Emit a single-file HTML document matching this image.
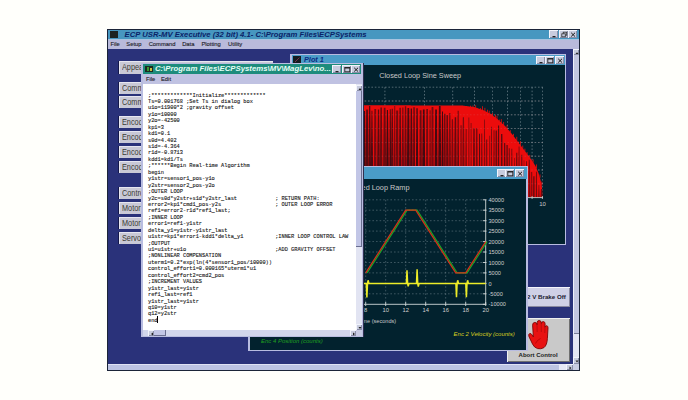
<!DOCTYPE html>
<html><head><meta charset="utf-8">
<style>
*{margin:0;padding:0;box-sizing:border-box}
html,body{width:688px;height:400px;overflow:hidden;background:#fffffb;font-family:"Liberation Sans",sans-serif}
.a{position:absolute}
.btn{left:119px;width:154px;height:12px;background:#c9c9d6;border-top:1px solid #e6e6f0;border-left:1px solid #e6e6f0;box-shadow:-1px 0 0 #14184a;font-size:0;white-space:nowrap;overflow:hidden}
.btn span{position:absolute;left:1.6px;top:-1px;font-size:8.8px;line-height:12px;color:#3c3c34;transform:scaleX(0.83);transform-origin:0 0}
.win{background:#b8bce0}
.pp{background:#02222e}
.tb{background:#4a9cc8}
.wb{position:absolute;width:9px;height:8px;background:#c8ccde;border-top:1px solid #f2f4fc;border-left:1px solid #f2f4fc;box-shadow:inset -1px -1px 0 #8a8ea8}
.wb svg{position:absolute;left:0;top:0}
.menu{font-size:5.8px;color:#1c1c28;-webkit-text-stroke:0.12px #1c1c28;white-space:nowrap;line-height:7px}
pre{position:absolute;left:148px;top:92.5px;font-family:"Liberation Mono",monospace;font-size:5.3px;line-height:6.43px;color:#1a1a1a;-webkit-text-stroke:0.12px #1a1a1a}
.ttl{font-weight:bold;font-style:italic;white-space:nowrap}
.lbl{white-space:nowrap;color:#c8c8c8}
</style></head><body>
<!-- outer window -->
<div class="a" style="left:107px;top:29px;width:473px;height:342px;background:#1b2438"></div>
<div class="a" style="left:108px;top:30px;width:471px;height:9px;background:#4797c0"></div>
<div class="a" style="left:110px;top:31px;width:8px;height:7px;background:#1c2422"></div>
<div class="a ttl" style="left:124.6px;top:29.5px;font-size:7.7px;color:#0a2468">ECP USR-MV Executive (32 bit) 4.1- C:\Program Files\ECPSystems</div>
<div class="a wb" style="left:549px;top:30px"><svg width="9" height="8"><rect x="2.5" y="5" width="3" height="1.3" fill="#222"/></svg></div>
<div class="a wb" style="left:558.5px;top:30px"><svg width="9" height="8"><rect x="3.2" y="1.2" width="3.5" height="3" fill="none" stroke="#333" stroke-width="0.8"/><rect x="1.8" y="2.8" width="3.5" height="3" fill="#c4c8dc" stroke="#333" stroke-width="0.8"/></svg></div>
<div class="a wb" style="left:568.3px;top:30px"><svg width="9" height="8"><path d="M2.2 1.8L6 5.5M6 1.8L2.2 5.5" stroke="#1a1a1a" stroke-width="1"/></svg></div>
<div class="a" style="left:108px;top:39px;width:471px;height:10px;background:#b9badb;border-top:1px solid #a8c4e0"></div>
<div class="a menu" style="left:110.5px;top:40.5px">File</div>
<div class="a menu" style="left:126.3px;top:40.5px">Setup</div>
<div class="a menu" style="left:148.7px;top:40.5px">Command</div>
<div class="a menu" style="left:182.2px;top:40.5px">Data</div>
<div class="a menu" style="left:201.4px;top:40.5px">Plotting</div>
<div class="a menu" style="left:228.1px;top:40.5px">Utility</div>
<div class="a" style="left:108px;top:49px;width:465px;height:315px;background:#2a327a"></div>
<div class="a" style="left:573px;top:49px;width:6px;height:315px;background:#c3c6e0"></div>
<div class="a wb" style="left:573px;top:49px;width:6px;height:6px"><svg width="6" height="6"><path d="M1.5 4L3 2.2L4.5 4Z" fill="#222"/></svg></div>
<div class="a" style="left:573px;top:334px;width:6px;height:23px;background:#e4e6f4"></div><div class="a" style="left:573px;top:55px;width:6px;height:279px;background:#c3c6e0;border-left:1px solid #eef0fa;box-shadow:inset 0 -1px 0 #7a7e98"></div><div class="a wb" style="left:573px;top:357px;width:6px;height:7px"><svg width="6" height="7"><path d="M1.5 2.5L3 4.5L4.5 2.5Z" fill="#222"/></svg></div>
<div class="a" style="left:108px;top:364px;width:471px;height:6px;background:#bcc3e3;border-top:1px solid #dfe2f4"></div><div class="a" style="left:558.5px;top:364px;width:7.5px;height:6px;background:#e6e8f6"></div><div class="a wb" style="left:566px;top:364px;width:7px;height:6px"><svg width="7" height="6"><path d="M2.5 1.5L4.5 3L2.5 4.5Z" fill="#222"/></svg></div><div class="a" style="left:573px;top:364px;width:6px;height:6px;background:#c8cce2"></div>

<!-- left buttons -->
<div class="a btn" style="top:61px;height:13px"><span>Appearance</span></div>
<div class="a btn" style="top:82px"><span>Comm</span></div>
<div class="a btn" style="top:96px"><span>Comm</span></div>
<div class="a btn" style="top:116px"><span>Encoder</span></div>
<div class="a btn" style="top:131px"><span>Encoder</span></div>
<div class="a btn" style="top:146px"><span>Encoder</span></div>
<div class="a btn" style="top:161px"><span>Encoder</span></div>
<div class="a btn" style="top:187px"><span>Control</span></div>
<div class="a btn" style="top:202px"><span>Motor</span></div>
<div class="a btn" style="top:217px"><span>Motor</span></div>
<div class="a btn" style="top:232px"><span>Servo</span></div>

<!-- right buttons -->
<div class="a" style="left:507px;top:286.5px;width:63px;height:20.5px;background:#cfd0e6;border-top:1px solid #f4f4fc;border-left:1px solid #f4f4fc;box-shadow:inset -1px -1px 0 #8888a0"></div>
<div class="a" style="left:527px;top:292.5px;font-size:6.2px;font-weight:bold;color:#202030;white-space:nowrap">2 V Brake Off</div>
<div class="a" style="left:507px;top:317.5px;width:63px;height:44px;background:#c9c9c9;border-top:1px solid #f0f0f0;border-left:1px solid #f0f0f0;box-shadow:inset -1px -1px 0 #707070"></div>
<svg class="a" style="left:527px;top:319px" width="22" height="31" viewBox="0 0 22 31">
<path d="M6.2 15 L5.6 6.2 Q5.6 3.4 7.9 3.4 Q10 3.4 10.1 5.8 L10.2 3.4 Q10.3 1.5 12.2 1.5 Q14.1 1.5 14.2 3.6 L14.3 4.6 Q14.4 2.6 16.3 2.6 Q18.2 2.7 18.1 4.9 L18 8.4 Q18.3 6.6 19.7 6.7 Q21.1 6.9 21 8.9 L20.4 19.5 Q20 26.2 17 28.6 Q14 30.4 10.6 29.6 Q7.2 28.6 5.6 25.2 L1.9 17.4 Q1.2 15.3 2.6 14.6 Q4 14 5 15.8 L6.4 18 Z" fill="#e81212" stroke="#800606" stroke-width="0.9"/>
<path d="M10 6 L10.2 13 M14.2 5 L14.3 13 M18 9 L17.8 14" stroke="#a00808" stroke-width="0.6" fill="none"/>
<path d="M8.5 24.5 Q10 21 13.5 19.5" stroke="#a00" stroke-width="0.7" fill="none"/>
</svg>
<div class="a" style="left:518.6px;top:351.5px;font-size:6px;font-weight:bold;color:#202020;white-space:nowrap">Abort Control</div>

<!-- Plot 1 window -->
<div class="a win" style="left:290px;top:54px;width:276px;height:191px"></div>
<div class="a tb" style="left:292px;top:55px;width:273px;height:10px"></div>
<div class="a" style="left:292.8px;top:56px;width:8px;height:7px;background:#141c20"></div><svg class="a" style="left:292.8px;top:56px" width="8" height="7"><path d="M2 6L6.5 1.5" stroke="#803050" stroke-width="0.9"/></svg>
<div class="a ttl" style="left:304px;top:55px;font-size:7.3px;color:#0c2a80">Plot 1</div>
<div class="a wb" style="left:535.5px;top:56px"><svg width="9" height="8"><rect x="2.5" y="5" width="3" height="1.3" fill="#222"/></svg></div>
<div class="a wb" style="left:545px;top:56px"><svg width="9" height="8"><rect x="1.8" y="1.5" width="5" height="4.3" fill="none" stroke="#222" stroke-width="0.9"/><rect x="1.8" y="1.5" width="5" height="1" fill="#222"/></svg></div>
<div class="a wb" style="left:554.5px;top:56px"><svg width="9" height="8"><path d="M2.2 1.8L6 5.5M6 1.8L2.2 5.5" stroke="#1a1a1a" stroke-width="1"/></svg></div>
<div class="a pp" style="left:291px;top:65px;width:274px;height:179px"></div>
<div class="a lbl" style="left:379.2px;top:71px;font-size:7.3px">Closed Loop Sine Sweep</div>
<svg class="a" style="left:0;top:0" width="688" height="400" viewBox="0 0 688 400"><defs><clipPath id="c1"><rect x="291" y="65" width="274" height="179"/></clipPath><clipPath id="c2"><rect x="250" y="179" width="276" height="171"/></clipPath></defs><g clip-path="url(#c1)">
<line x1="300" y1="87.2" x2="543" y2="87.2" stroke="#8fa0a8" stroke-width="0.7" stroke-dasharray="1.6 1.8" opacity="0.8"/>
<line x1="300" y1="101.0" x2="543" y2="101.0" stroke="#8fa0a8" stroke-width="0.7" stroke-dasharray="1.6 1.8" opacity="0.8"/>
<line x1="300" y1="114.8" x2="543" y2="114.8" stroke="#8fa0a8" stroke-width="0.7" stroke-dasharray="1.6 1.8" opacity="0.8"/>
<line x1="300" y1="128.6" x2="543" y2="128.6" stroke="#8fa0a8" stroke-width="0.7" stroke-dasharray="1.6 1.8" opacity="0.8"/>
<line x1="300" y1="142.4" x2="543" y2="142.4" stroke="#8fa0a8" stroke-width="0.7" stroke-dasharray="1.6 1.8" opacity="0.8"/>
<line x1="300" y1="156.2" x2="543" y2="156.2" stroke="#8fa0a8" stroke-width="0.7" stroke-dasharray="1.6 1.8" opacity="0.8"/>
<line x1="300" y1="170.0" x2="543" y2="170.0" stroke="#8fa0a8" stroke-width="0.7" stroke-dasharray="1.6 1.8" opacity="0.8"/>
<line x1="300" y1="183.8" x2="543" y2="183.8" stroke="#8fa0a8" stroke-width="0.7" stroke-dasharray="1.6 1.8" opacity="0.8"/>
<line x1="317.0" y1="87.2" x2="317.0" y2="197.6" stroke="#8fa0a8" stroke-width="0.7" stroke-dasharray="1.6 1.8" opacity="0.8"/>
<line x1="384.9" y1="87.2" x2="384.9" y2="197.6" stroke="#8fa0a8" stroke-width="0.7" stroke-dasharray="1.6 1.8" opacity="0.8"/>
<line x1="424.5" y1="87.2" x2="424.5" y2="197.6" stroke="#8fa0a8" stroke-width="0.7" stroke-dasharray="1.6 1.8" opacity="0.8"/>
<line x1="452.7" y1="87.2" x2="452.7" y2="197.6" stroke="#8fa0a8" stroke-width="0.7" stroke-dasharray="1.6 1.8" opacity="0.8"/>
<line x1="474.5" y1="87.2" x2="474.5" y2="197.6" stroke="#8fa0a8" stroke-width="0.7" stroke-dasharray="1.6 1.8" opacity="0.8"/>
<line x1="492.4" y1="87.2" x2="492.4" y2="197.6" stroke="#8fa0a8" stroke-width="0.7" stroke-dasharray="1.6 1.8" opacity="0.8"/>
<line x1="507.5" y1="87.2" x2="507.5" y2="197.6" stroke="#8fa0a8" stroke-width="0.7" stroke-dasharray="1.6 1.8" opacity="0.8"/>
<line x1="520.6" y1="87.2" x2="520.6" y2="197.6" stroke="#8fa0a8" stroke-width="0.7" stroke-dasharray="1.6 1.8" opacity="0.8"/>
<line x1="532.1" y1="87.2" x2="532.1" y2="197.6" stroke="#8fa0a8" stroke-width="0.7" stroke-dasharray="1.6 1.8" opacity="0.8"/>
<line x1="542.4" y1="87.2" x2="542.4" y2="197.6" stroke="#8fa0a8" stroke-width="0.7" stroke-dasharray="1.6 1.8" opacity="0.8"/>
<line x1="159.5" y1="87.2" x2="159.5" y2="197.6" stroke="#8fa0a8" stroke-width="0.7" stroke-dasharray="1.6 1.8" opacity="0.8"/>
<line x1="199.1" y1="87.2" x2="199.1" y2="197.6" stroke="#8fa0a8" stroke-width="0.7" stroke-dasharray="1.6 1.8" opacity="0.8"/>
<line x1="227.3" y1="87.2" x2="227.3" y2="197.6" stroke="#8fa0a8" stroke-width="0.7" stroke-dasharray="1.6 1.8" opacity="0.8"/>
<line x1="249.1" y1="87.2" x2="249.1" y2="197.6" stroke="#8fa0a8" stroke-width="0.7" stroke-dasharray="1.6 1.8" opacity="0.8"/>
<line x1="267.0" y1="87.2" x2="267.0" y2="197.6" stroke="#8fa0a8" stroke-width="0.7" stroke-dasharray="1.6 1.8" opacity="0.8"/>
<line x1="282.1" y1="87.2" x2="282.1" y2="197.6" stroke="#8fa0a8" stroke-width="0.7" stroke-dasharray="1.6 1.8" opacity="0.8"/>
<line x1="295.2" y1="87.2" x2="295.2" y2="197.6" stroke="#8fa0a8" stroke-width="0.7" stroke-dasharray="1.6 1.8" opacity="0.8"/>
<line x1="306.7" y1="87.2" x2="306.7" y2="197.6" stroke="#8fa0a8" stroke-width="0.7" stroke-dasharray="1.6 1.8" opacity="0.8"/>
<polygon points="291,197.6 291.0,105.0 291.5,105.0 292.0,105.0 292.5,105.0 293.0,105.0 293.5,105.0 294.0,105.0 294.5,105.0 295.0,105.0 295.5,105.0 296.0,105.0 296.5,105.0 297.0,105.0 297.5,105.0 298.0,105.0 298.5,105.0 299.0,105.0 299.5,105.0 300.0,105.0 300.5,105.0 301.0,105.0 301.5,105.0 302.0,105.0 302.5,105.0 303.0,105.0 303.5,105.0 304.0,105.0 304.5,105.0 305.0,105.0 305.5,105.0 306.0,105.0 306.5,105.0 307.0,105.0 307.5,105.0 308.0,105.0 308.5,105.1 309.0,105.1 309.5,105.1 310.0,105.1 310.5,105.1 311.0,105.1 311.5,105.1 312.0,105.1 312.5,105.1 313.0,105.1 313.5,105.1 314.0,105.1 314.5,105.1 315.0,105.1 315.5,105.1 316.0,105.1 316.5,105.1 317.0,105.1 317.5,105.1 318.0,105.1 318.5,105.1 319.0,105.1 319.5,105.1 320.0,105.1 320.5,105.1 321.0,105.1 321.5,105.1 322.0,105.1 322.5,105.1 323.0,105.1 323.5,105.1 324.0,105.1 324.5,105.1 325.0,105.1 325.5,105.1 326.0,105.1 326.5,105.1 327.0,105.1 327.5,105.1 328.0,105.1 328.5,105.1 329.0,105.1 329.5,105.1 330.0,105.1 330.5,105.1 331.0,105.1 331.5,105.1 332.0,105.1 332.5,105.1 333.0,105.1 333.5,105.1 334.0,105.1 334.5,105.1 335.0,105.1 335.5,105.1 336.0,105.1 336.5,105.1 337.0,105.1 337.5,105.1 338.0,105.1 338.5,105.1 339.0,105.1 339.5,105.1 340.0,105.1 340.5,105.1 341.0,105.1 341.5,105.1 342.0,105.1 342.5,105.2 343.0,105.2 343.5,105.2 344.0,105.2 344.5,105.2 345.0,105.2 345.5,105.2 346.0,105.2 346.5,105.2 347.0,105.2 347.5,105.2 348.0,105.2 348.5,105.2 349.0,105.2 349.5,105.2 350.0,105.2 350.5,105.2 351.0,105.2 351.5,105.2 352.0,105.2 352.5,105.2 353.0,105.2 353.5,105.2 354.0,105.2 354.5,105.2 355.0,105.2 355.5,105.2 356.0,105.2 356.5,105.2 357.0,105.2 357.5,105.2 358.0,105.2 358.5,105.2 359.0,105.2 359.5,105.2 360.0,105.2 360.5,105.2 361.0,105.2 361.5,105.2 362.0,105.2 362.5,105.2 363.0,105.2 363.5,105.2 364.0,105.2 364.5,105.2 365.0,105.2 365.5,105.2 366.0,105.2 366.5,105.2 367.0,105.2 367.5,105.2 368.0,105.2 368.5,105.2 369.0,105.2 369.5,105.2 370.0,105.2 370.5,105.2 371.0,105.2 371.5,105.2 372.0,105.2 372.5,105.2 373.0,105.2 373.5,105.2 374.0,105.2 374.5,105.2 375.0,105.2 375.5,105.2 376.0,105.2 376.5,105.2 377.0,105.3 377.5,105.3 378.0,105.3 378.5,105.3 379.0,105.3 379.5,105.3 380.0,105.3 380.5,105.3 381.0,105.3 381.5,105.3 382.0,105.3 382.5,105.3 383.0,105.3 383.5,105.3 384.0,105.3 384.5,105.3 385.0,105.3 385.5,105.3 386.0,105.3 386.5,105.3 387.0,105.3 387.5,105.3 388.0,105.3 388.5,105.3 389.0,105.3 389.5,105.3 390.0,105.3 390.5,105.3 391.0,105.3 391.5,105.3 392.0,105.3 392.5,105.3 393.0,105.3 393.5,105.3 394.0,105.3 394.5,105.3 395.0,105.3 395.5,105.3 396.0,105.3 396.5,105.3 397.0,105.3 397.5,105.3 398.0,105.3 398.5,105.3 399.0,105.3 399.5,105.3 400.0,105.3 400.5,105.3 401.0,105.3 401.5,105.3 402.0,105.3 402.5,105.3 403.0,105.3 403.5,105.3 404.0,105.3 404.5,105.3 405.0,105.3 405.5,105.3 406.0,105.3 406.5,105.3 407.0,105.3 407.5,105.3 408.0,105.3 408.5,105.3 409.0,105.3 409.5,105.3 410.0,105.3 410.5,105.3 411.0,105.4 411.5,105.4 412.0,105.4 412.5,105.4 413.0,105.4 413.5,105.4 414.0,105.4 414.5,105.4 415.0,105.4 415.5,105.4 416.0,105.4 416.5,105.4 417.0,105.4 417.5,105.4 418.0,105.4 418.5,105.4 419.0,105.4 419.5,105.4 420.0,105.4 420.5,105.4 421.0,105.4 421.5,105.4 422.0,105.4 422.5,105.4 423.0,105.4 423.5,105.4 424.0,105.4 424.5,105.4 425.0,105.4 425.5,105.4 426.0,105.4 426.5,105.4 427.0,105.4 427.5,105.4 428.0,105.4 428.5,105.4 429.0,105.4 429.5,105.4 430.0,105.4 430.5,105.4 431.0,105.4 431.5,105.4 432.0,105.4 432.5,105.4 433.0,105.4 433.5,105.4 434.0,105.4 434.5,105.4 435.0,105.4 435.5,105.4 436.0,105.4 436.5,105.4 437.0,105.4 437.5,105.4 438.0,105.4 438.5,105.4 439.0,105.4 439.5,105.4 440.0,105.4 440.5,105.4 441.0,105.4 441.5,105.4 442.0,105.4 442.5,105.4 443.0,105.4 443.5,105.4 444.0,105.4 444.5,105.4 445.0,105.5 445.5,105.5 446.0,105.5 446.5,105.5 447.0,105.5 447.5,105.5 448.0,105.5 448.5,105.5 449.0,105.5 449.5,105.5 450.0,105.5 450.5,105.5 451.0,105.5 451.5,105.5 452.0,105.5 452.5,105.5 453.0,105.5 453.5,105.5 454.0,105.5 454.5,105.5 455.0,105.5 455.5,105.5 456.0,105.5 456.5,105.5 457.0,105.5 457.5,105.5 458.0,105.5 458.5,105.5 459.0,105.5 459.5,105.5 460.0,105.5 460.5,105.5 461.0,105.5 461.5,105.5 462.0,105.5 462.5,105.6 463.0,105.6 463.5,105.7 464.0,105.8 464.5,105.8 465.0,105.9 465.5,105.9 466.0,106.0 466.5,106.1 467.0,106.1 467.5,106.2 468.0,106.2 468.5,106.3 469.0,106.4 469.5,106.4 470.0,106.5 470.5,106.6 471.0,106.6 471.5,106.7 472.0,106.8 472.5,106.8 473.0,106.9 473.5,106.9 474.0,107.0 474.5,107.2 475.0,107.3 475.5,107.5 476.0,107.7 476.5,107.8 477.0,108.0 477.5,108.2 478.0,108.3 478.5,108.5 479.0,108.7 479.5,108.8 480.0,109.0 480.5,109.2 481.0,109.3 481.5,109.5 482.0,109.7 482.5,109.8 483.0,110.0 483.5,110.2 484.0,110.5 484.5,110.8 485.0,111.0 485.5,111.2 486.0,111.5 486.5,111.8 487.0,112.0 487.5,112.2 488.0,112.5 488.5,112.8 489.0,113.0 489.5,113.2 490.0,113.5 490.5,113.8 491.0,114.0 491.5,114.4 492.0,114.8 492.5,115.2 493.0,115.6 493.5,116.0 494.0,116.4 494.5,116.8 495.0,117.1 495.5,117.5 496.0,117.9 496.5,118.3 497.0,118.7 497.5,119.1 498.0,119.5 498.5,120.0 499.0,120.4 499.5,120.9 500.0,121.4 500.5,121.8 501.0,122.3 501.5,122.8 502.0,123.2 502.5,123.7 503.0,124.1 503.5,124.6 504.0,125.1 504.5,125.5 505.0,126.0 505.5,126.6 506.0,127.1 506.5,127.7 507.0,128.3 507.5,128.9 508.0,129.4 508.5,130.0 509.0,130.6 509.5,131.1 510.0,131.7 510.5,132.3 511.0,132.9 511.5,133.4 512.0,134.0 512.5,134.7 513.0,135.3 513.5,136.0 514.0,136.7 514.5,137.3 515.0,138.0 515.5,138.7 516.0,139.3 516.5,140.0 517.0,140.7 517.5,141.3 518.0,142.0 518.5,142.7 519.0,143.3 519.5,143.9 520.0,144.6 520.5,145.2 521.0,145.9 521.5,146.6 522.0,147.2 522.5,147.8 523.0,148.5 523.5,149.2 524.0,149.8 524.5,150.4 525.0,151.1 525.5,151.8 526.0,152.4 526.5,153.1 527.0,153.7 527.5,154.3 528.0,155.0 528.5,155.7 529.0,156.4 529.5,157.1 530.0,157.8 530.5,158.4 531.0,159.1 531.5,159.8 532.0,160.5 532.5,161.3 533.0,162.1 533.5,162.9 534.0,163.6 534.5,164.4 535.0,165.2 535.5,166.0 536.0,167.2 536.5,168.3 537.0,169.5 537.5,170.7 538.0,171.8 538.5,173.0 539.0,174.7 539.5,176.5 540.0,178.2 540.5,180.0 541.0,182.2 541.5,185.1 542.0,188.0 542.5,196.0 542.6,197.6" fill="#ec0c0c"/>
<rect x="470.0" y="105.7" width="0.8" height="1.8" fill="#ec0c0c"/>
<rect x="472.6" y="105.5" width="0.8" height="2.3" fill="#ec0c0c"/>
<rect x="475.3" y="105.2" width="0.8" height="3.2" fill="#ec0c0c"/>
<rect x="476.9" y="107.9" width="0.8" height="1.0" fill="#ec0c0c"/>
<rect x="480.1" y="108.1" width="0.8" height="1.9" fill="#ec0c0c"/>
<rect x="482.1" y="106.2" width="0.8" height="4.5" fill="#ec0c0c"/>
<rect x="484.5" y="107.8" width="0.8" height="3.9" fill="#ec0c0c"/>
<rect x="487.0" y="109.7" width="0.8" height="3.2" fill="#ec0c0c"/>
<rect x="488.8" y="110.7" width="0.8" height="3.2" fill="#ec0c0c"/>
<rect x="492.0" y="113.0" width="0.8" height="2.8" fill="#ec0c0c"/>
<rect x="495.0" y="114.8" width="0.8" height="3.3" fill="#ec0c0c"/>
<rect x="496.6" y="115.8" width="0.8" height="3.7" fill="#ec0c0c"/>
<rect x="499.3" y="119.6" width="0.8" height="2.1" fill="#ec0c0c"/>
<rect x="500.9" y="119.1" width="0.8" height="4.0" fill="#ec0c0c"/>
<rect x="503.3" y="121.9" width="0.8" height="3.5" fill="#ec0c0c"/>
<rect x="506.6" y="125.3" width="0.8" height="3.5" fill="#ec0c0c"/>
<rect x="509.9" y="130.2" width="0.8" height="2.4" fill="#ec0c0c"/>
<rect x="513.0" y="133.8" width="0.8" height="2.6" fill="#ec0c0c"/>
<rect x="516.4" y="136.8" width="0.8" height="4.1" fill="#ec0c0c"/>
<rect x="518.1" y="141.6" width="0.8" height="1.5" fill="#ec0c0c"/>
<rect x="520.0" y="141.2" width="0.8" height="4.4" fill="#ec0c0c"/>
<rect x="522.4" y="145.5" width="0.8" height="3.2" fill="#ec0c0c"/>
<rect x="524.5" y="148.6" width="0.8" height="2.8" fill="#ec0c0c"/>
<rect x="526.7" y="152.1" width="0.8" height="2.2" fill="#ec0c0c"/>
<rect x="529.4" y="154.9" width="0.8" height="3.0" fill="#ec0c0c"/>
<rect x="532.7" y="159.3" width="0.8" height="3.4" fill="#ec0c0c"/>
<rect x="536.1" y="164.4" width="0.8" height="4.0" fill="#ec0c0c"/>
<rect x="539.6" y="174.4" width="0.8" height="3.3" fill="#ec0c0c"/>
<rect x="541.4" y="181.5" width="0.8" height="4.0" fill="#ec0c0c"/>
<polygon points="291.0,108.6 292.8,108.6 293.9,197.6 289.9,197.6" fill="#2a0a12" opacity="0.83"/>
<polygon points="293.9,107.1 295.4,107.1 296.6,197.6 292.7,197.6" fill="#2a0a12" opacity="0.62"/>
<polygon points="297.2,109.9 298.2,109.9 298.9,197.6 296.6,197.6" fill="#2a0a12" opacity="0.73"/>
<polygon points="299.3,110.3 301.0,110.3 301.4,197.6 298.9,197.6" fill="#2a0a12" opacity="0.61"/>
<polygon points="302.5,107.4 304.2,107.4 305.0,197.6 301.7,197.6" fill="#2a0a12" opacity="0.88"/>
<polygon points="306.1,107.2 308.0,107.2 308.5,197.6 305.7,197.6" fill="#2a0a12" opacity="0.62"/>
<polygon points="309.6,107.8 310.7,107.8 311.1,197.6 309.2,197.6" fill="#2a0a12" opacity="0.80"/>
<polygon points="311.8,107.3 313.5,107.3 314.2,197.6 311.1,197.6" fill="#2a0a12" opacity="0.91"/>
<polygon points="315.4,108.4 316.8,108.4 317.6,197.6 314.6,197.6" fill="#2a0a12" opacity="0.81"/>
<polygon points="318.3,110.8 319.9,110.8 320.8,197.6 317.4,197.6" fill="#2a0a12" opacity="0.76"/>
<polygon points="321.2,107.2 322.4,107.2 323.2,197.6 320.4,197.6" fill="#2a0a12" opacity="0.91"/>
<polygon points="323.8,107.9 324.8,107.9 325.7,197.6 323.0,197.6" fill="#2a0a12" opacity="0.79"/>
<polygon points="325.7,105.9 327.2,105.9 328.2,197.6 324.7,197.6" fill="#2a0a12" opacity="0.80"/>
<polygon points="328.6,109.5 329.9,109.5 330.3,197.6 328.2,197.6" fill="#2a0a12" opacity="0.84"/>
<polygon points="330.8,110.9 332.4,110.9 333.3,197.6 329.9,197.6" fill="#2a0a12" opacity="0.68"/>
<polygon points="333.8,107.6 335.0,107.6 335.9,197.6 332.9,197.6" fill="#2a0a12" opacity="0.70"/>
<polygon points="336.3,107.7 337.5,107.7 338.4,197.6 335.5,197.6" fill="#2a0a12" opacity="0.85"/>
<polygon points="338.4,107.3 340.1,107.3 340.7,197.6 337.8,197.6" fill="#2a0a12" opacity="0.67"/>
<polygon points="341.9,108.0 342.9,108.0 343.6,197.6 341.2,197.6" fill="#2a0a12" opacity="0.82"/>
<polygon points="344.0,110.2 345.2,110.2 345.7,197.6 343.4,197.6" fill="#2a0a12" opacity="0.74"/>
<polygon points="347.0,109.2 348.3,109.2 348.8,197.6 346.5,197.6" fill="#2a0a12" opacity="0.88"/>
<polygon points="349.7,108.6 350.7,108.6 351.8,197.6 348.6,197.6" fill="#2a0a12" opacity="0.66"/>
<polygon points="352.5,107.2 353.6,107.2 354.6,197.6 351.4,197.6" fill="#2a0a12" opacity="0.86"/>
<polygon points="355.2,106.4 356.4,106.4 357.0,197.6 354.5,197.6" fill="#2a0a12" opacity="0.69"/>
<polygon points="358.2,108.0 359.4,108.0 360.6,197.6 357.0,197.6" fill="#2a0a12" opacity="0.73"/>
<polygon points="360.8,105.7 361.8,105.7 363.0,197.6 359.6,197.6" fill="#2a0a12" opacity="0.90"/>
<polygon points="363.7,110.9 365.0,110.9 366.0,197.6 362.7,197.6" fill="#2a0a12" opacity="0.90"/>
<polygon points="366.2,109.4 367.9,109.4 368.6,197.6 365.5,197.6" fill="#2a0a12" opacity="0.77"/>
<polygon points="369.1,106.1 370.3,106.1 371.3,197.6 368.1,197.6" fill="#2a0a12" opacity="0.79"/>
<polygon points="371.5,110.7 372.4,110.7 373.5,197.6 370.4,197.6" fill="#2a0a12" opacity="0.82"/>
<polygon points="374.3,108.9 376.1,108.9 376.7,197.6 373.8,197.6" fill="#2a0a12" opacity="0.60"/>
<polygon points="377.9,109.4 379.1,109.4 380.2,197.6 376.7,197.6" fill="#2a0a12" opacity="0.77"/>
<polygon points="380.4,107.6 381.9,107.6 382.7,197.6 379.6,197.6" fill="#2a0a12" opacity="0.68"/>
<polygon points="383.8,107.7 385.5,107.7 386.5,197.6 382.7,197.6" fill="#2a0a12" opacity="0.66"/>
<polygon points="386.9,110.1 388.0,110.1 389.1,197.6 385.9,197.6" fill="#2a0a12" opacity="0.89"/>
<polygon points="389.8,109.2 390.7,109.2 391.3,197.6 389.2,197.6" fill="#2a0a12" opacity="0.88"/>
<polygon points="391.7,108.7 392.8,108.7 393.9,197.6 390.6,197.6" fill="#2a0a12" opacity="0.74"/>
<polygon points="394.3,106.1 395.2,106.1 395.6,197.6 393.8,197.6" fill="#2a0a12" opacity="0.64"/>
<polygon points="396.2,110.5 398.1,110.5 398.7,197.6 395.5,197.6" fill="#2a0a12" opacity="0.63"/>
<polygon points="399.5,107.7 400.7,107.7 401.4,197.6 398.8,197.6" fill="#2a0a12" opacity="0.81"/>
<polygon points="402.3,107.6 403.4,107.6 404.3,197.6 401.3,197.6" fill="#2a0a12" opacity="0.64"/>
<polygon points="404.9,106.3 406.2,106.3 407.0,197.6 404.0,197.6" fill="#2a0a12" opacity="0.66"/>
<polygon points="407.5,107.9 409.2,107.9 409.9,197.6 406.7,197.6" fill="#2a0a12" opacity="0.86"/>
<polygon points="410.7,108.6 412.0,108.6 413.0,197.6 409.8,197.6" fill="#2a0a12" opacity="0.82"/>
<polygon points="413.4,107.2 414.7,107.2 415.2,197.6 412.9,197.6" fill="#2a0a12" opacity="0.77"/>
<polygon points="416.4,108.2 417.7,108.2 418.4,197.6 415.7,197.6" fill="#2a0a12" opacity="0.88"/>
<polygon points="419.7,110.2 421.5,110.2 422.0,197.6 419.2,197.6" fill="#2a0a12" opacity="0.68"/>
<polygon points="422.9,109.5 424.6,109.5 425.5,197.6 421.9,197.6" fill="#2a0a12" opacity="0.88"/>
<polygon points="426.3,109.0 428.0,109.0 428.4,197.6 425.9,197.6" fill="#2a0a12" opacity="0.63"/>
<polygon points="429.5,110.2 430.6,110.2 431.1,197.6 429.1,197.6" fill="#2a0a12" opacity="0.61"/>
<polygon points="431.6,106.9 433.4,106.9 433.9,197.6 431.1,197.6" fill="#2a0a12" opacity="0.61"/>
<polygon points="435.2,109.6 436.9,109.6 437.8,197.6 434.3,197.6" fill="#2a0a12" opacity="0.87"/>
<polygon points="438.9,106.1 440.6,106.1 441.5,197.6 437.9,197.6" fill="#2a0a12" opacity="0.85"/>
<polygon points="442.0,111.6 443.0,111.6 443.7,197.6 441.4,197.6" fill="#2a0a12" opacity="0.89"/>
<polygon points="444.0,113.8 445.4,113.8 446.0,197.6 443.4,197.6" fill="#2a0a12" opacity="0.66"/>
<polygon points="446.5,115.1 447.9,115.1 448.6,197.6 445.9,197.6" fill="#2a0a12" opacity="0.70"/>
<polygon points="449.2,112.9 450.4,112.9 451.4,197.6 448.2,197.6" fill="#2a0a12" opacity="0.59"/>
<polygon points="451.8,119.2 453.0,119.2 453.9,197.6 451.0,197.6" fill="#2a0a12" opacity="0.60"/>
<polygon points="454.7,117.3 456.1,117.3 457.0,197.6 453.8,197.6" fill="#2a0a12" opacity="0.70"/>
<polygon points="457.7,110.7 458.6,110.7 459.2,197.6 457.1,197.6" fill="#2a0a12" opacity="0.77"/>
<polygon points="460.5,125.2 461.6,125.2 461.9,197.6 460.1,197.6" fill="#2a0a12" opacity="0.58"/>
<polygon points="462.8,117.3 464.0,117.3 464.8,197.6 462.0,197.6" fill="#2a0a12" opacity="0.58"/>
<polygon points="465.7,129.1 466.6,129.1 467.1,197.6 465.1,197.6" fill="#2a0a12" opacity="0.63"/>
<polygon points="468.4,117.5 469.3,117.5 469.7,197.6 468.1,197.6" fill="#2a0a12" opacity="0.49"/>
<polygon points="470.7,122.9 471.5,122.9 471.7,197.6 470.5,197.6" fill="#2a0a12" opacity="0.58"/>
<polygon points="473.3,128.3 474.7,128.3 475.2,197.6 472.7,197.6" fill="#2a0a12" opacity="0.67"/>
<polygon points="476.1,128.2 477.4,128.2 477.9,197.6 475.6,197.6" fill="#2a0a12" opacity="0.62"/>
<polygon points="479.1,133.8 480.0,133.8 480.2,197.6 478.8,197.6" fill="#2a0a12" opacity="0.79"/>
<polygon points="481.4,133.6 482.2,133.6 482.7,197.6 480.9,197.6" fill="#2a0a12" opacity="0.69"/>
<polygon points="484.1,119.5 484.9,119.5 485.4,197.6 483.7,197.6" fill="#2a0a12" opacity="0.54"/>
<polygon points="486.0,139.5 487.3,139.5 487.6,197.6 485.8,197.6" fill="#2a0a12" opacity="0.54"/>
<polygon points="489.2,135.7 490.1,135.7 490.6,197.6 488.7,197.6" fill="#2a0a12" opacity="0.48"/>
<polygon points="491.1,126.7 491.9,126.7 492.0,197.6 491.0,197.6" fill="#2a0a12" opacity="0.65"/>
<polygon points="493.6,130.3 494.5,130.3 494.8,197.6 493.2,197.6" fill="#2a0a12" opacity="0.62"/>
<polygon points="495.6,130.5 497.0,130.5 497.2,197.6 495.3,197.6" fill="#2a0a12" opacity="0.64"/>
<polygon points="498.0,125.4 499.1,125.4 499.3,197.6 497.8,197.6" fill="#2a0a12" opacity="0.76"/>
<polygon points="501.0,134.0 502.4,134.0 502.6,197.6 500.8,197.6" fill="#2a0a12" opacity="0.72"/>
<polygon points="504.1,142.7 505.2,142.7 505.7,197.6 503.6,197.6" fill="#2a0a12" opacity="0.73"/>
<polygon points="506.4,145.1 507.8,145.1 508.1,197.6 506.1,197.6" fill="#2a0a12" opacity="0.64"/>
<polygon points="508.8,148.3 509.7,148.3 509.9,197.6 508.6,197.6" fill="#2a0a12" opacity="0.69"/>
<polygon points="511.2,148.7 512.3,148.7 512.8,197.6 510.8,197.6" fill="#2a0a12" opacity="0.51"/>
<polygon points="514.2,157.9 514.9,157.9 515.4,197.6 513.8,197.6" fill="#2a0a12" opacity="0.50"/>
<polygon points="516.2,152.7 517.3,152.7 517.5,197.6 515.9,197.6" fill="#2a0a12" opacity="0.68"/>
<polygon points="518.7,146.6 519.4,146.6 519.8,197.6 518.3,197.6" fill="#2a0a12" opacity="0.70"/>
<polygon points="521.1,154.8 522.3,154.8 522.9,197.6 520.6,197.6" fill="#2a0a12" opacity="0.54"/>
<polygon points="523.7,160.3 524.3,160.3 524.6,197.6 523.4,197.6" fill="#2a0a12" opacity="0.54"/>
<polygon points="526.0,161.3 526.9,161.3 527.2,197.6 525.8,197.6" fill="#2a0a12" opacity="0.64"/>
<polygon points="528.7,159.8 529.9,159.8 530.1,197.6 528.5,197.6" fill="#2a0a12" opacity="0.54"/>
<polygon points="530.9,172.1 532.2,172.1 532.5,197.6 530.6,197.6" fill="#2a0a12" opacity="0.51"/>
<polygon points="533.3,176.3 534.5,176.3 534.6,197.6 533.1,197.6" fill="#2a0a12" opacity="0.71"/>
<polygon points="536.0,171.7 536.9,171.7 537.1,197.6 535.8,197.6" fill="#2a0a12" opacity="0.63"/>
<polygon points="538.5,185.0 539.3,185.0 539.8,197.6 537.9,197.6" fill="#2a0a12" opacity="0.46"/>
<polygon points="541.0,188.9 542.4,188.9 542.8,197.6 540.6,197.6" fill="#2a0a12" opacity="0.64"/>
<line x1="300" y1="101.0" x2="543" y2="101.0" stroke="#d09090" stroke-width="0.7" stroke-dasharray="1.6 1.8" opacity="0.25"/>
<line x1="300" y1="114.8" x2="543" y2="114.8" stroke="#d09090" stroke-width="0.7" stroke-dasharray="1.6 1.8" opacity="0.25"/>
<line x1="300" y1="128.6" x2="543" y2="128.6" stroke="#d09090" stroke-width="0.7" stroke-dasharray="1.6 1.8" opacity="0.25"/>
<line x1="300" y1="142.4" x2="543" y2="142.4" stroke="#d09090" stroke-width="0.7" stroke-dasharray="1.6 1.8" opacity="0.25"/>
<line x1="300" y1="156.2" x2="543" y2="156.2" stroke="#d09090" stroke-width="0.7" stroke-dasharray="1.6 1.8" opacity="0.25"/>
<line x1="300" y1="170.0" x2="543" y2="170.0" stroke="#d09090" stroke-width="0.7" stroke-dasharray="1.6 1.8" opacity="0.25"/>
<line x1="300" y1="183.8" x2="543" y2="183.8" stroke="#d09090" stroke-width="0.7" stroke-dasharray="1.6 1.8" opacity="0.25"/>
<line x1="300" y1="197.6" x2="543" y2="197.6" stroke="#c8d0d0" stroke-width="0.9"/>
<line x1="317.0" y1="196" x2="317.0" y2="199" stroke="#c8d0d0" stroke-width="0.8"/>
<line x1="384.9" y1="196" x2="384.9" y2="199" stroke="#c8d0d0" stroke-width="0.8"/>
<line x1="424.5" y1="196" x2="424.5" y2="199" stroke="#c8d0d0" stroke-width="0.8"/>
<line x1="452.7" y1="196" x2="452.7" y2="199" stroke="#c8d0d0" stroke-width="0.8"/>
<line x1="474.5" y1="196" x2="474.5" y2="199" stroke="#c8d0d0" stroke-width="0.8"/>
<line x1="492.4" y1="196" x2="492.4" y2="199" stroke="#c8d0d0" stroke-width="0.8"/>
<line x1="507.5" y1="196" x2="507.5" y2="199" stroke="#c8d0d0" stroke-width="0.8"/>
<line x1="520.6" y1="196" x2="520.6" y2="199" stroke="#c8d0d0" stroke-width="0.8"/>
<line x1="532.1" y1="196" x2="532.1" y2="199" stroke="#c8d0d0" stroke-width="0.8"/>
<line x1="542.4" y1="196" x2="542.4" y2="199" stroke="#c8d0d0" stroke-width="0.8"/>
<line x1="159.5" y1="196" x2="159.5" y2="199" stroke="#c8d0d0" stroke-width="0.8"/>
<line x1="199.1" y1="196" x2="199.1" y2="199" stroke="#c8d0d0" stroke-width="0.8"/>
<line x1="227.3" y1="196" x2="227.3" y2="199" stroke="#c8d0d0" stroke-width="0.8"/>
<line x1="249.1" y1="196" x2="249.1" y2="199" stroke="#c8d0d0" stroke-width="0.8"/>
<line x1="267.0" y1="196" x2="267.0" y2="199" stroke="#c8d0d0" stroke-width="0.8"/>
<line x1="282.1" y1="196" x2="282.1" y2="199" stroke="#c8d0d0" stroke-width="0.8"/>
<line x1="295.2" y1="196" x2="295.2" y2="199" stroke="#c8d0d0" stroke-width="0.8"/>
<line x1="306.7" y1="196" x2="306.7" y2="199" stroke="#c8d0d0" stroke-width="0.8"/>
<text x="542.5" y="206.3" fill="#c8c8c8" font-size="6" text-anchor="middle" font-family="Liberation Sans">10</text>
</g></svg>

<!-- Plot 2 window -->
<div class="a win" style="left:248px;top:166px;width:280px;height:185px"></div>
<div class="a tb" style="left:249px;top:167px;width:278px;height:12px"></div>
<div class="a wb" style="left:496.5px;top:168.5px"><svg width="9" height="8"><rect x="2.5" y="5" width="3" height="1.3" fill="#222"/></svg></div>
<div class="a wb" style="left:505px;top:168.5px"><svg width="9" height="8"><rect x="1.8" y="1.5" width="5" height="4.3" fill="none" stroke="#222" stroke-width="0.9"/><rect x="1.8" y="1.5" width="5" height="1" fill="#222"/></svg></div>
<div class="a wb" style="left:515px;top:168.5px"><svg width="9" height="8"><path d="M2.2 1.8L6 5.5M6 1.8L2.2 5.5" stroke="#1a1a1a" stroke-width="1"/></svg></div>
<div class="a pp" style="left:250px;top:179px;width:276px;height:171px"></div>
<div class="a lbl" style="left:347px;top:183px;font-size:7.3px">Closed Loop Ramp</div>
<svg class="a" style="left:0;top:0" width="688" height="400" viewBox="0 0 688 400"><g clip-path="url(#c2)">
<line x1="250" y1="293.8" x2="485.7" y2="293.8" stroke="#8fa0a8" stroke-width="0.7" stroke-dasharray="1.6 2" opacity="0.6"/>
<line x1="250" y1="283.4" x2="485.7" y2="283.4" stroke="#8fa0a8" stroke-width="0.7" stroke-dasharray="1.6 2" opacity="0.6"/>
<line x1="250" y1="272.9" x2="485.7" y2="272.9" stroke="#8fa0a8" stroke-width="0.7" stroke-dasharray="1.6 2" opacity="0.6"/>
<line x1="250" y1="262.5" x2="485.7" y2="262.5" stroke="#8fa0a8" stroke-width="0.7" stroke-dasharray="1.6 2" opacity="0.6"/>
<line x1="250" y1="252.0" x2="485.7" y2="252.0" stroke="#8fa0a8" stroke-width="0.7" stroke-dasharray="1.6 2" opacity="0.6"/>
<line x1="250" y1="241.6" x2="485.7" y2="241.6" stroke="#8fa0a8" stroke-width="0.7" stroke-dasharray="1.6 2" opacity="0.6"/>
<line x1="250" y1="231.1" x2="485.7" y2="231.1" stroke="#8fa0a8" stroke-width="0.7" stroke-dasharray="1.6 2" opacity="0.6"/>
<line x1="250" y1="220.7" x2="485.7" y2="220.7" stroke="#8fa0a8" stroke-width="0.7" stroke-dasharray="1.6 2" opacity="0.6"/>
<line x1="250" y1="210.2" x2="485.7" y2="210.2" stroke="#8fa0a8" stroke-width="0.7" stroke-dasharray="1.6 2" opacity="0.6"/>
<line x1="250" y1="199.8" x2="485.7" y2="199.8" stroke="#8fa0a8" stroke-width="0.7" stroke-dasharray="1.6 2" opacity="0.6"/>
<line x1="285.7" y1="199.8" x2="285.7" y2="303.8" stroke="#8fa0a8" stroke-width="0.7" stroke-dasharray="1.6 2" opacity="0.6"/>
<line x1="305.7" y1="199.8" x2="305.7" y2="303.8" stroke="#8fa0a8" stroke-width="0.7" stroke-dasharray="1.6 2" opacity="0.6"/>
<line x1="325.7" y1="199.8" x2="325.7" y2="303.8" stroke="#8fa0a8" stroke-width="0.7" stroke-dasharray="1.6 2" opacity="0.6"/>
<line x1="345.7" y1="199.8" x2="345.7" y2="303.8" stroke="#8fa0a8" stroke-width="0.7" stroke-dasharray="1.6 2" opacity="0.6"/>
<line x1="365.7" y1="199.8" x2="365.7" y2="303.8" stroke="#8fa0a8" stroke-width="0.7" stroke-dasharray="1.6 2" opacity="0.6"/>
<line x1="385.7" y1="199.8" x2="385.7" y2="303.8" stroke="#8fa0a8" stroke-width="0.7" stroke-dasharray="1.6 2" opacity="0.6"/>
<line x1="405.7" y1="199.8" x2="405.7" y2="303.8" stroke="#8fa0a8" stroke-width="0.7" stroke-dasharray="1.6 2" opacity="0.6"/>
<line x1="425.7" y1="199.8" x2="425.7" y2="303.8" stroke="#8fa0a8" stroke-width="0.7" stroke-dasharray="1.6 2" opacity="0.6"/>
<line x1="445.7" y1="199.8" x2="445.7" y2="303.8" stroke="#8fa0a8" stroke-width="0.7" stroke-dasharray="1.6 2" opacity="0.6"/>
<line x1="465.7" y1="199.8" x2="465.7" y2="303.8" stroke="#8fa0a8" stroke-width="0.7" stroke-dasharray="1.6 2" opacity="0.6"/>
<line x1="250" y1="304.3" x2="486" y2="304.3" stroke="#d0d8d8" stroke-width="0.9"/>
<line x1="485.7" y1="199.8" x2="485.7" y2="304.3" stroke="#d0d8d8" stroke-width="0.9"/>
<line x1="482.8" y1="304.3" x2="486.5" y2="304.3" stroke="#d0d8d8" stroke-width="0.9"/>
<text x="488.5" y="306.4" fill="#d0d0d0" font-size="5.6" font-family="Liberation Sans">-10000</text>
<line x1="482.8" y1="293.8" x2="486.5" y2="293.8" stroke="#d0d8d8" stroke-width="0.9"/>
<text x="488.5" y="295.9" fill="#d0d0d0" font-size="5.6" font-family="Liberation Sans">-5000</text>
<line x1="482.8" y1="283.4" x2="486.5" y2="283.4" stroke="#d0d8d8" stroke-width="0.9"/>
<text x="488.5" y="285.5" fill="#d0d0d0" font-size="5.6" font-family="Liberation Sans">0</text>
<line x1="482.8" y1="272.9" x2="486.5" y2="272.9" stroke="#d0d8d8" stroke-width="0.9"/>
<text x="488.5" y="275.1" fill="#d0d0d0" font-size="5.6" font-family="Liberation Sans">5000</text>
<line x1="482.8" y1="262.5" x2="486.5" y2="262.5" stroke="#d0d8d8" stroke-width="0.9"/>
<text x="488.5" y="264.6" fill="#d0d0d0" font-size="5.6" font-family="Liberation Sans">10000</text>
<line x1="482.8" y1="252.0" x2="486.5" y2="252.0" stroke="#d0d8d8" stroke-width="0.9"/>
<text x="488.5" y="254.1" fill="#d0d0d0" font-size="5.6" font-family="Liberation Sans">15000</text>
<line x1="482.8" y1="241.6" x2="486.5" y2="241.6" stroke="#d0d8d8" stroke-width="0.9"/>
<text x="488.5" y="243.7" fill="#d0d0d0" font-size="5.6" font-family="Liberation Sans">20000</text>
<line x1="482.8" y1="231.1" x2="486.5" y2="231.1" stroke="#d0d8d8" stroke-width="0.9"/>
<text x="488.5" y="233.2" fill="#d0d0d0" font-size="5.6" font-family="Liberation Sans">25000</text>
<line x1="482.8" y1="220.7" x2="486.5" y2="220.7" stroke="#d0d8d8" stroke-width="0.9"/>
<text x="488.5" y="222.8" fill="#d0d0d0" font-size="5.6" font-family="Liberation Sans">30000</text>
<line x1="482.8" y1="210.2" x2="486.5" y2="210.2" stroke="#d0d8d8" stroke-width="0.9"/>
<text x="488.5" y="212.3" fill="#d0d0d0" font-size="5.6" font-family="Liberation Sans">35000</text>
<line x1="482.8" y1="199.8" x2="486.5" y2="199.8" stroke="#d0d8d8" stroke-width="0.9"/>
<text x="488.5" y="201.9" fill="#d0d0d0" font-size="5.6" font-family="Liberation Sans">40000</text>
<line x1="285.7" y1="302" x2="285.7" y2="306" stroke="#d0d8d8" stroke-width="0.9"/>
<text x="285.7" y="311.7" fill="#d0d0d0" font-size="5.8" text-anchor="middle" font-family="Liberation Sans">0</text>
<line x1="305.7" y1="302" x2="305.7" y2="306" stroke="#d0d8d8" stroke-width="0.9"/>
<text x="305.7" y="311.7" fill="#d0d0d0" font-size="5.8" text-anchor="middle" font-family="Liberation Sans">2</text>
<line x1="325.7" y1="302" x2="325.7" y2="306" stroke="#d0d8d8" stroke-width="0.9"/>
<text x="325.7" y="311.7" fill="#d0d0d0" font-size="5.8" text-anchor="middle" font-family="Liberation Sans">4</text>
<line x1="345.7" y1="302" x2="345.7" y2="306" stroke="#d0d8d8" stroke-width="0.9"/>
<text x="345.7" y="311.7" fill="#d0d0d0" font-size="5.8" text-anchor="middle" font-family="Liberation Sans">6</text>
<line x1="365.7" y1="302" x2="365.7" y2="306" stroke="#d0d8d8" stroke-width="0.9"/>
<text x="365.7" y="311.7" fill="#d0d0d0" font-size="5.8" text-anchor="middle" font-family="Liberation Sans">8</text>
<line x1="385.7" y1="302" x2="385.7" y2="306" stroke="#d0d8d8" stroke-width="0.9"/>
<text x="385.7" y="311.7" fill="#d0d0d0" font-size="5.8" text-anchor="middle" font-family="Liberation Sans">10</text>
<line x1="405.7" y1="302" x2="405.7" y2="306" stroke="#d0d8d8" stroke-width="0.9"/>
<text x="405.7" y="311.7" fill="#d0d0d0" font-size="5.8" text-anchor="middle" font-family="Liberation Sans">12</text>
<line x1="425.7" y1="302" x2="425.7" y2="306" stroke="#d0d8d8" stroke-width="0.9"/>
<text x="425.7" y="311.7" fill="#d0d0d0" font-size="5.8" text-anchor="middle" font-family="Liberation Sans">14</text>
<line x1="445.7" y1="302" x2="445.7" y2="306" stroke="#d0d8d8" stroke-width="0.9"/>
<text x="445.7" y="311.7" fill="#d0d0d0" font-size="5.8" text-anchor="middle" font-family="Liberation Sans">16</text>
<line x1="465.7" y1="302" x2="465.7" y2="306" stroke="#d0d8d8" stroke-width="0.9"/>
<text x="465.7" y="311.7" fill="#d0d0d0" font-size="5.8" text-anchor="middle" font-family="Liberation Sans">18</text>
<line x1="485.7" y1="302" x2="485.7" y2="306" stroke="#d0d8d8" stroke-width="0.9"/>
<text x="485.7" y="311.7" fill="#d0d0d0" font-size="5.8" text-anchor="middle" font-family="Liberation Sans">20</text>
<polyline points="367.1,272.9 407.1,210.2 417.1,210.2 457.1,272.9 467.1,272.9 487.1,241.6" fill="none" stroke="#18a828" stroke-width="1.2"/>
<polyline points="365.7,272.9 405.7,210.2 415.7,210.2 455.7,272.9 465.7,272.9 485.7,241.6" fill="none" stroke="#d83018" stroke-width="1.2"/>
<polyline points="285.7,283.4 366.3,283.4 366.9,297.5 367.5,283.4 368.1,280.3 368.9,283.4 406.4,283.4 407.0,270.2 407.6,283.4 408.2,286.3 409.0,283.4 416.5,283.4 417.1,269.2 417.7,283.4 418.3,286.5 419.1,283.4 455.9,283.4 456.5,297.3 457.1,283.4 457.7,280.3 458.5,283.4 465.8,283.4 466.4,297.3 467.0,283.4 467.6,280.3 468.4,283.4 485.7,283.4" fill="none" stroke="#ecec28" stroke-width="1.5"/>
</g></svg>
<div class="a lbl" style="left:357.9px;top:317.7px;font-size:5.6px">Time (seconds)</div>
<div class="a" style="left:453.6px;top:330.5px;font-size:6px;font-style:italic;color:#d8d020;white-space:nowrap">Enc 2 Velocity (counts)</div>
<div class="a" style="left:261px;top:337.5px;font-size:6px;font-style:italic;color:#20a020;white-space:nowrap">Enc 4 Position (counts)</div>

<!-- Text window -->
<div class="a" style="left:141px;top:63px;width:222px;height:274px;background:#b9bde0;box-shadow:1px 0 0 #303050"></div>
<div class="a" style="left:143px;top:64px;width:218px;height:10px;background:#1e8c7c"></div>
<div class="a" style="left:144.5px;top:66px;width:8.5px;height:6px;background:#1c2a22"></div><div class="a" style="left:147px;top:67px;width:2px;height:4px;background:#3a9a30"></div><div class="a" style="left:149.5px;top:67.5px;width:2px;height:3px;background:#c8c040"></div>
<div class="a ttl" style="left:154.9px;top:64px;font-size:7.8px;color:#e4fff6">C:\Program Files\ECPSystems\MV\MagLev\no...</div>
<div class="a wb" style="left:332px;top:65px"><svg width="9" height="8"><rect x="2.5" y="5" width="3" height="1.3" fill="#222"/></svg></div>
<div class="a wb" style="left:341.5px;top:65px"><svg width="9" height="8"><rect x="1.8" y="1.5" width="5" height="4.3" fill="none" stroke="#222" stroke-width="0.9"/><rect x="1.8" y="1.5" width="5" height="1" fill="#222"/></svg></div>
<div class="a wb" style="left:351px;top:65px"><svg width="9" height="8"><path d="M2.2 1.8L6 5.5M6 1.8L2.2 5.5" stroke="#1a1a1a" stroke-width="1"/></svg></div>
<div class="a" style="left:143px;top:74px;width:219px;height:10px;background:#c0c2e2"></div>
<div class="a menu" style="left:146px;top:75.5px">File</div>
<div class="a menu" style="left:161px;top:75.5px">Edit</div>
<div class="a" style="left:143px;top:84px;width:213px;height:246px;background:#fff"></div>
<!-- vscroll -->
<div class="a" style="left:356px;top:84px;width:6px;height:246px;background:#e2e4f2"></div>
<div class="a" style="left:356px;top:90.5px;width:6px;height:156px;background:#c2c6e6;box-shadow:inset -1px -1px 0 #6a6e90"></div>
<div class="a wb" style="left:356px;top:84.5px;width:6px;height:6px"><svg width="6" height="6"><path d="M1.5 4L3 2L4.5 4Z" fill="#222"/></svg></div>
<div class="a wb" style="left:356px;top:324px;width:6px;height:6px"><svg width="6" height="6"><path d="M1.5 2L3 4L4.5 2Z" fill="#222"/></svg></div>
<!-- hscroll -->
<div class="a" style="left:143px;top:330px;width:213px;height:6px;background:#d2d6ec"></div>
<div class="a wb" style="left:147.5px;top:330px;width:6px;height:6px"><svg width="6" height="6"><path d="M4 1.5L2 3L4 4.5Z" fill="#222"/></svg></div>
<div class="a" style="left:153.5px;top:330px;width:12px;height:6px;background:#c2c6e6;box-shadow:inset -1px -1px 0 #6a6e90"></div>
<div class="a wb" style="left:349.5px;top:330px;width:6px;height:6px"><svg width="6" height="6"><path d="M2 1.5L4 3L2 4.5Z" fill="#222"/></svg></div>
<div class="a" style="left:356px;top:330px;width:6px;height:6px;background:#c8cce4"></div>
<pre>;*************Initialize*************
Ts=0.001768 ;Set Ts in dialog box
u1o=11900*2 ;gravity offset
y1o=10000
y2o=-42500
kp1=3
kd1=0.1
s0d=4.402
s1d=-4.364
r1d=-0.8713
kdd1=kd1/Ts
;******Begin Real-time Algorithm
begin
y1str=sensor1_pos-y1o
y2str=sensor2_pos-y2o
;OUTER LOOP
y2c=s0d*y2str+s1d*y2str_last            ; RETURN PATH:
error2=kp1*cmd1_pos-y2s                 ; OUTER LOOP ERROR
ref1=error2-r1d*ref1_last;
;INNER LOOP
error1=ref1-y1str
delta_y1=y1str-y1str_last
u1str=kp1*error1-kdd1*delta_y1          ;INNER LOOP CONTROL LAW
;OUTPUT
u1=u1str+u1o                            ;ADD GRAVITY OFFSET
;NONLINEAR COMPENSATION
uterm1=0.2*exp(ln(4*sensor1_pos/10000))
control_effort1=0.000165*uterm1*u1
control_effort2=cmd2_pos
;INCREMENT VALUES
y1str_last=y1str
ref1_last=ref1
y1str_last=y1str
q10=y1str
q12=y2str
end</pre>
<div class="a" style="left:157px;top:315.5px;width:1.3px;height:7px;background:#000"></div>
</body></html>
